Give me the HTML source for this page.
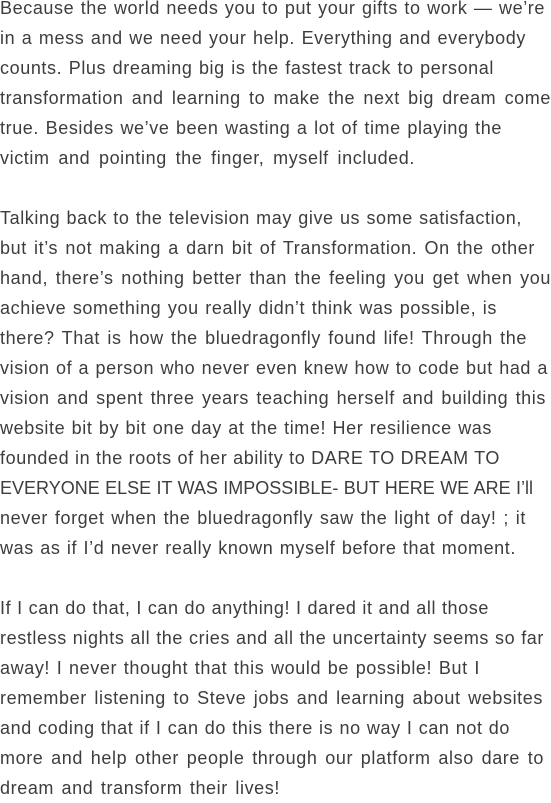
<!DOCTYPE html>
<html><head><meta charset="utf-8"><style>
html,body{margin:0;padding:0;background:#fff;width:551px;height:795px;overflow:hidden}
.t{position:absolute;top:-7px;left:0;font-family:"Liberation Sans",sans-serif;font-size:18px;letter-spacing:0.6px;line-height:30px;color:#3d3d3d;white-space:nowrap}
.t div{height:30px;text-align:justify;text-align-last:justify;overflow:visible}
</style></head><body><div class="t">
<div style="width:545px">Because the world needs you to put your gifts to work — we’re</div>
<div style="width:526px">in a mess and we need your help. Everything and everybody</div>
<div style="width:494px">counts. Plus dreaming big is the fastest track to personal</div>
<div style="width:551px">transformation and learning to make the next big dream come</div>
<div style="width:502px">true. Besides we’ve been wasting a lot of time playing the</div>
<div style="width:415px">victim and pointing the finger, myself included.</div>
<div></div>
<div style="width:522px">Talking back to the television may give us some satisfaction,</div>
<div style="width:535px">but it’s not making a darn bit of Transformation. On the other</div>
<div style="width:551px">hand, there’s nothing better than the feeling you get when you</div>
<div style="width:497px">achieve something you really didn’t think was possible, is</div>
<div style="width:527px">there? That is how the bluedragonfly found life! Through the</div>
<div style="width:548px">vision of a person who never even knew how to code but had a</div>
<div style="width:546px">vision and spent three years teaching herself and building this</div>
<div style="width:492px">website bit by bit one day at the time! Her resilience was</div>
<div style="width:500px">founded in the roots of her ability to DARE TO DREAM TO</div>
<div style="width:533px;letter-spacing:0px">EVERYONE ELSE IT WAS IMPOSSIBLE- BUT HERE WE ARE I’ll</div>
<div style="width:526px">never forget when the bluedragonfly saw the light of day! ; it</div>
<div style="width:516px">was as if I’d never really known myself before that moment.</div>
<div></div>
<div style="width:489px">If I can do that, I can do anything! I dared it and all those</div>
<div style="width:544px">restless nights all the cries and all the uncertainty seems so far</div>
<div style="width:480px">away! I never thought that this would be possible! But I</div>
<div style="width:543px">remember listening to Steve jobs and learning about websites</div>
<div style="width:510px">and coding that if I can do this there is no way I can not do</div>
<div style="width:544px">more and help other people through our platform also dare to</div>
<div style="width:280px">dream and transform their lives!</div>
</div></body></html>
